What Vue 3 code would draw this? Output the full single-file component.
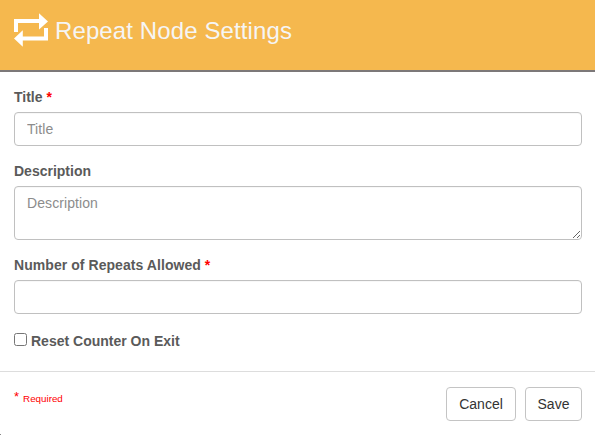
<script setup>
import { ref } from 'vue'

const title = ref('')
const description = ref('')
const repeats = ref('')
const resetOnExit = ref(false)
</script>

<template>
  <form class="dialog" @submit.prevent>
    <header class="header">
      <svg class="icon" width="34" height="34" viewBox="0 0 34 34" aria-hidden="true">
        <path fill="#fff" d="M0 19V6H25V0.2L34 8.4L25 16.6V10H4V19Z" />
        <path fill="#fff" d="M34 15V27.4H8.8V33.8L0 25.4L8.8 17.2V23.4H30V15Z" />
      </svg>
      <h1 class="heading">Repeat Node Settings</h1>
    </header>

    <main class="body">
      <div class="group">
        <label for="title">Title <span class="star">*</span></label>
        <input id="title" v-model="title" class="control" type="text" placeholder="Title" />
      </div>
      <div class="group">
        <label for="description">Description</label>
        <textarea id="description" v-model="description" class="control area" placeholder="Description"></textarea>
      </div>
      <div class="group">
        <label class="wide" for="repeats">Number of Repeats Allowed <span class="star">*</span></label>
        <input id="repeats" v-model="repeats" class="control" type="text" />
      </div>
      <label class="check">
        <input v-model="resetOnExit" type="checkbox" />
        <span>Reset Counter On Exit</span>
      </label>
    </main>

    <footer class="footer">
      <div class="required"><span class="required-star">*</span><span>Required</span></div>
      <div class="actions">
        <button type="button">Cancel</button>
        <button type="submit">Save</button>
      </div>
    </footer>
    <span class="corner"></span>
  </form>
</template>

<style>
body {
  margin: 0;
  background: #fff;
  overflow: hidden;
}
</style>

<style scoped>
.dialog,
.dialog * {
  box-sizing: border-box;
}
.dialog {
  position: relative;
  height: 435px;
  display: flex;
  flex-direction: column;
  font: 14px/20px "Liberation Sans", Arial, sans-serif;
  color: #5a5a5a;
}
.header {
  height: 72px;
  display: flex;
  align-items: flex-start;
  gap: 7px;
  padding: 13px 14px 0;
  background: #f5b84e;
  border-bottom: 2px solid #7c7879;
}
.icon {
  flex: none;
}
.heading {
  margin: 4px 0 0;
  font-size: 24px;
  line-height: 28px;
  font-weight: 400;
  letter-spacing: 0.11px;
  color: #f5f5f5;
  white-space: nowrap;
}
.body {
  height: 299px;
  padding: 15px 13px 0 14px;
}
.group {
  margin-bottom: 15px;
}
.group label {
  display: block;
  margin-bottom: 5px;
  font-weight: 700;
}
.group .wide {
  letter-spacing: 0.06px;
}
.star {
  color: #f00;
}
.control {
  display: block;
  width: 100%;
  height: 34px;
  margin: 0;
  padding: 6px 12px;
  border: 1px solid #c0c0c0;
  border-radius: 4px;
  background: #fff;
  box-shadow: inset 0 1px 1px rgba(0, 0, 0, 0.03);
  font: inherit;
  color: #555;
  outline: none;
}
.control::placeholder {
  color: #8c8c8c;
  letter-spacing: 0.08px;
  opacity: 1;
}
.area {
  height: 54px;
  resize: vertical;
}
.check {
  display: flex;
  align-items: flex-start;
  gap: 4px;
  padding-top: 2px;
  font-weight: 700;
}
.check input {
  width: 13px;
  height: 13px;
  margin: 2px 0 0;
}
.footer {
  flex: 1;
  display: flex;
  align-items: flex-start;
  justify-content: space-between;
  padding: 15px 13px 0 14px;
  border-top: 1px solid #ddd;
}
.required {
  display: flex;
  align-items: flex-start;
  gap: 4px;
  padding-top: 5px;
  color: #f00;
  font-size: 9.8px;
  line-height: 14px;
}
.required-star {
  font-size: 13px;
  line-height: 10px;
}
.actions {
  display: flex;
  gap: 9px;
}
button {
  height: 34px;
  padding: 6px 0;
  width: 70px;
  border: 1px solid #c4c4c4;
  border-radius: 4px;
  background: #fff;
  color: #333;
  font: inherit;
}
button[type='submit'] {
  width: 57px;
}
.corner {
  position: absolute;
  left: 0;
  bottom: 0;
  width: 1px;
  height: 1px;
  background: #888;
}
</style>
